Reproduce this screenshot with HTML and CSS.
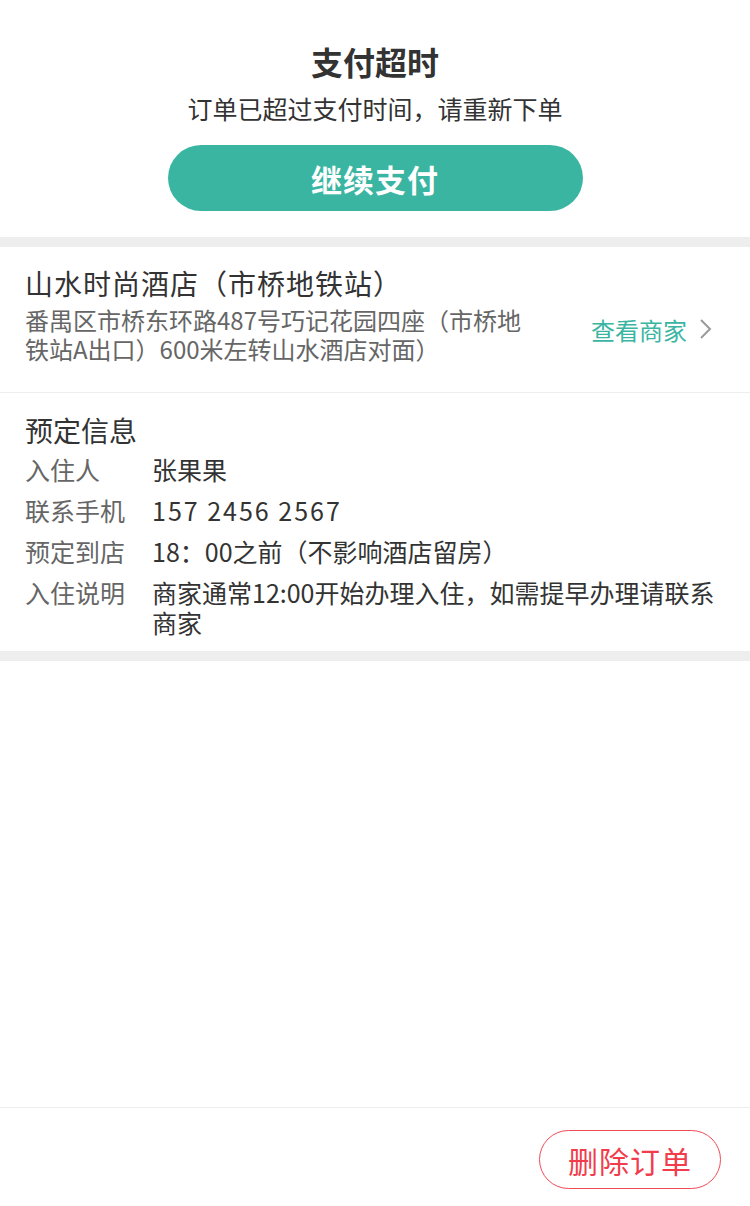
FILE: index.html
```html
<!DOCTYPE html>
<html lang="zh-CN">
<head>
<meta charset="utf-8">
<title>支付超时</title>
<link rel="stylesheet" href="styles.css">
</head>
<body>
<div class="page">
  <section class="status">
    <h1 class="status-title">支付超时</h1>
    <p class="status-desc">订单已超过支付时间，请重新下单</p>
    <button class="pay-btn">继续支付</button>
  </section>
  <div class="gap"></div>
  <section class="hotel">
    <h2 class="hotel-name">山水时尚酒店（市桥地铁站）</h2>
    <div class="hotel-row">
      <p class="hotel-addr">番禺区市桥东环路487号巧记花园四座（市桥地铁站A出口）600米左转山水酒店对面）</p>
      <a class="hotel-link">查看商家<svg class="chev" width="14" height="22" viewBox="0 0 14 22"><path d="M2 2 L11 11 L2 20" fill="none" stroke="#9a9a9a" stroke-width="2"/></svg></a>
    </div>
  </section>
  <section class="booking">
    <h2 class="booking-title">预定信息</h2>
    <div class="info-row"><span class="label">入住人</span><span class="value">张果果</span></div>
    <div class="info-row"><span class="label">联系手机</span><span class="value num">157 2456 2567</span></div>
    <div class="info-row"><span class="label">预定到店</span><span class="value">18：00之前（不影响酒店留房）</span></div>
    <div class="info-row"><span class="label">入住说明</span><span class="value">商家通常12:00开始办理入住，如需提早办理请联系商家</span></div>
  </section>
  <div class="gap"></div>
</div>
<footer class="bottom-bar">
  <button class="delete-btn">删除订单</button>
</footer>
</body>
</html>
```
FILE: styles.css
```css
* { box-sizing: border-box; }
html, body { margin: 0; padding: 0; background: #fff; }
body {
  font-family: "Noto Sans CJK SC", "Noto Sans", sans-serif;
  color: #333;
  height: 1206px;
  position: relative;
}
h1, h2, p { margin: 0; font-weight: normal; }
.status {
  display: flex;
  flex-direction: column;
  align-items: center;
  padding: 39px 0 26px;
}
.status-title {
  font-size: 32px;
  font-weight: bold;
  line-height: 44px;
  color: #333;
}
.status-desc {
  font-size: 25px;
  line-height: 36px;
  margin-top: 7px;
  color: #333;
}
.pay-btn {
  margin-top: 19px;
  width: 415px;
  height: 66px;
  border: none;
  border-radius: 33px;
  background: #3ab5a2;
  color: #fff;
  font-family: inherit;
  font-size: 31px;
  font-weight: bold;
  letter-spacing: 1px;
  padding: 0;
}
.gap { height: 10px; background: #eeeeee; }
.hotel {
  padding: 15px 37px 29px 25px;
  border-bottom: 1px solid #eeeeee;
}
.hotel-name {
  font-size: 28px;
  line-height: 42px;
  letter-spacing: 1px;
  color: #333;
}
.hotel-row {
  display: flex;
  align-items: center;
  justify-content: space-between;
  margin-top: 1px;
}
.hotel-addr {
  width: 514px;
  font-size: 24px;
  line-height: 29px;
  color: #666;
}
.hotel-link {
  display: flex;
  align-items: center;
  gap: 12px;
  margin-bottom: 10px;
  font-size: 24px;
  color: #3ab5a2;
}
.booking {
  padding: 16px 25px 14px 25px;
}
.booking-title {
  font-size: 28px;
  line-height: 42px;
  color: #333;
}
.info-row {
  display: flex;
  font-size: 25px;
  line-height: 30px;
  margin-top: 11px;
}
.booking-title + .info-row { margin-top: 3px; }
.label {
  width: 127px;
  flex-shrink: 0;
  color: #666;
}
.value { color: #333; flex: 1; }
.num { letter-spacing: 2px; }
.bottom-bar {
  position: absolute;
  left: 0;
  right: 0;
  bottom: 0;
  height: 99px;
  border-top: 1px solid #eeeeee;
  display: flex;
  justify-content: flex-end;
  align-items: flex-start;
  padding: 22px 29px 0 0;
  background: #fff;
}
.delete-btn {
  width: 182px;
  height: 59px;
  border: 1px solid #f04a55;
  border-radius: 30px;
  background: #fff;
  color: #f03c4b;
  font-family: inherit;
  font-size: 30px;
  padding: 0;
  letter-spacing: 1px;
}
```
